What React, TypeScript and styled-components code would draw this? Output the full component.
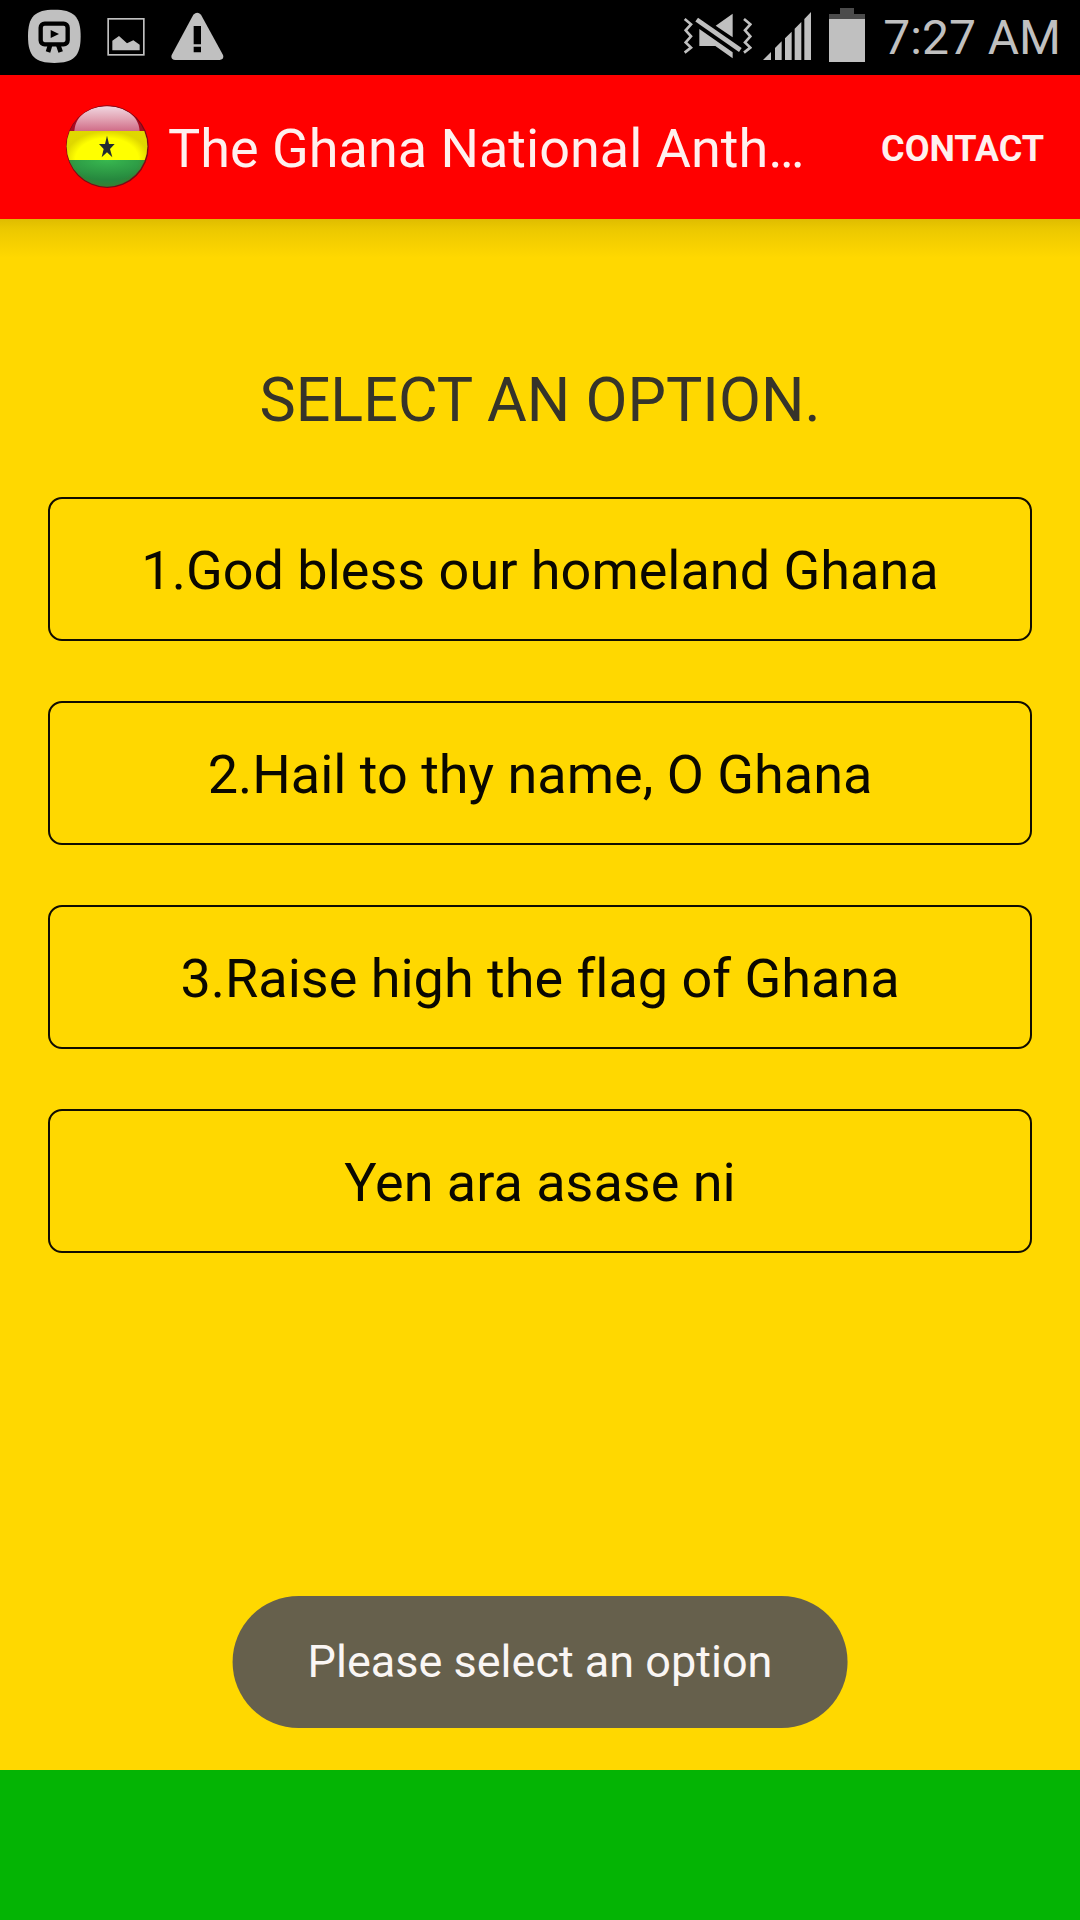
import React, { useState } from "react";
import styled, { createGlobalStyle } from "styled-components";

const GlobalStyle = createGlobalStyle`
  *, *::before, *::after { box-sizing: border-box; }
  body {
    margin: 0;
    background: #ffd800;
    font-family: Roboto, "Noto Sans", sans-serif;
    font-variant-ligatures: none;
  }
`;

const Screen = styled.div`
  display: flex;
  flex-direction: column;
  min-height: 100vh;
`;

const StatusBar = styled.div`
  display: flex;
  justify-content: space-between;
  height: 75px;
  padding: 0 19px 0 28px;
  background: #000;
  color: #c0c0c0;
`;

const StatusGroup = styled.div<{ $gap: number }>`
  display: flex;
  align-items: center;
  gap: ${(p) => p.$gap}px;
`;

const StatusIcon = styled.svg`
  display: block;
  height: 75px;
  fill: currentColor;
`;

const Clock = styled.time`
  font-size: 48px;
  line-height: 72px;
  white-space: nowrap;
`;

const AppBar = styled.header`
  display: flex;
  align-items: center;
  height: 144px;
  padding-left: 65px;
  background: #f00;
  color: #fff0ee;
`;

const FlagIcon = styled.svg`
  flex: none;
  width: 84px;
  height: 84px;
  margin-right: 19px;
`;

const Title = styled.h1`
  flex: 1;
  min-width: 0;
  margin: 0;
  padding-top: 4px;
  font-size: 54px;
  font-weight: 400;
  line-height: 72px;
  white-space: nowrap;
  overflow: hidden;
  text-overflow: ellipsis;
`;

const ContactButton = styled.button`
  flex: none;
  height: 144px;
  padding: 4px 36px 0 60px;
  border: 0;
  background: none;
  color: inherit;
  font: 700 36px/48px Roboto, sans-serif;
  text-transform: uppercase;
  cursor: pointer;
`;

const Main = styled.main`
  flex: 1;
  padding: 144px 48px 60px;
  background: linear-gradient(#dfbc00, #ebc800 25%, #f6d000 62%, #ffd800) top / 100% 39px
    no-repeat #ffd800;
`;

const Heading = styled.h2`
  margin: 0 0 60px;
  color: #36342a;
  font-size: 61px;
  font-weight: 400;
  line-height: 74px;
  text-align: center;
`;

const OptionList = styled.div`
  display: flex;
  flex-direction: column;
  gap: 60px;
`;

const OptionButton = styled.button`
  height: 144px;
  padding: 4px 24px 0;
  border: 2px solid #100c00;
  border-radius: 14px;
  background: transparent;
  color: #0a0800;
  font: 400 54px/64px Roboto, sans-serif;
  font-variant-ligatures: none;
  cursor: pointer;
`;

const Toast = styled.div`
  position: fixed;
  left: 50%;
  bottom: 192px;
  transform: translateX(-50%);
  padding: 36px 75px;
  border-radius: 66px;
  background: #66604c;
  color: #faf6f4;
  font-size: 45px;
  line-height: 60px;
  white-space: nowrap;
`;

const Footer = styled.footer`
  height: 150px;
  background: #04b404;
`;

const options = [
  "1.God bless our homeland Ghana",
  "2.Hail to thy name, O Ghana",
  "3.Raise high the flag of Ghana",
  "Yen ara asase ni",
];

const RecorderIcon = () => (
  <StatusIcon width="53" viewBox="83 0 159 225" aria-hidden="true">
    <path d="M162 29c58 0 79 20 79 80s-21 80-79 80-79-20-79-80 21-80 79-80z" />
    <rect x="121" y="71" width="81" height="62" rx="12" fill="none" stroke="#000" strokeWidth="13" />
    <path d="M151 90v24l25-12z" fill="#000" />
    <path d="M149 136l-6 20M174 136l7 20" stroke="#000" strokeWidth="14" />
  </StatusIcon>
);

const PictureIcon = () => (
  <StatusIcon width="38" viewBox="320 0 114 225" aria-hidden="true">
    <rect x="323.5" y="56.5" width="107" height="108" fill="none" stroke="currentColor" strokeWidth="5" />
    <path d="M336 151v-29l20-14 24 22 19-9 19 13v17z" />
  </StatusIcon>
);

const WarningIcon = () => (
  <StatusIcon width="53" viewBox="514 0 159 225" aria-hidden="true">
    <path d="M581 44q12-11 23 0l66 121q4 13-10 15H527q-15-2-11-15z" />
    <path d="M582 78h22v55h-22zM582 140h22v17h-22z" fill="#000" />
  </StatusIcon>
);

const MuteIcon = () => (
  <StatusIcon width="69" viewBox="70 0 207 225" aria-hidden="true">
    <path d="M168 77l51-36v71zM119 87l100 70v18l-52-37h-48z" />
    <path d="M111 59l131 91" stroke="#000" strokeWidth="29" />
    <path d="M111 59l131 91" stroke="currentColor" strokeWidth="14" />
    <path
      d="M75 57l19 16-16 18 16 18-16 18 16 16-19 15M253 57l19 16-16 18 16 18-16 18 16 16-19 15"
      fill="none"
      stroke="currentColor"
      strokeWidth="8"
    />
  </StatusIcon>
);

const SignalIcon = () => (
  <StatusIcon width="48" viewBox="309 0 144 225" aria-hidden="true">
    <path d="M309 180l24-24v24zM345 180v-36l20-20v56zM375 180v-65l20-20v85zM404 180V86l20-20v114zM433 180V57l20-21v144z" />
  </StatusIcon>
);

const BatteryIcon = () => (
  <StatusIcon width="36" viewBox="507 0 108 225" aria-hidden="true">
    <path d="M540 24h42v18h33v15H507V42h33z" fill="#4b4b4b" />
    <path d="M507 57h108v129H507z" />
  </StatusIcon>
);

const GhanaFlag = () => (
  <FlagIcon viewBox="0 0 252 252" role="img" aria-label="Flag of Ghana">
    <defs>
      <clipPath id="ball">
        <circle cx="126" cy="124" r="121" />
      </clipPath>
      <linearGradient id="gloss" x1="0" y1="0" x2="0" y2="1">
        <stop offset="0" stopColor="#f0d6e0" />
        <stop offset=".5" stopColor="#e2a4b4" />
        <stop offset="1" stopColor="#d06c88" />
      </linearGradient>
      <radialGradient id="leaf" cx=".5" cy="0" r=".7">
        <stop offset="0" stopColor="#38b850" />
        <stop offset="1" stopColor="#26883e" />
      </radialGradient>
      <radialGradient id="shade">
        <stop offset=".75" stopColor="#806000" stopOpacity="0" />
        <stop offset="1" stopColor="#806000" stopOpacity=".25" />
      </radialGradient>
    </defs>
    <circle cx="127" cy="125" r="124" fill="#7c0a14" />
    <g clipPath="url(#ball)">
      <path d="M0 0h252v78H0z" fill="#a80c24" />
      <path d="M28 78C32 28 76 4 126 4s94 24 98 74z" fill="url(#gloss)" />
      <path d="M0 78h252v87H0z" fill="#ff0" />
      <path d="M0 165h252v84H0z" fill="url(#leaf)" />
      <path d="M0 78h252v171H0z" fill="url(#shade)" />
    </g>
    <path d="M126 92l6 25h17l-14 15 7 25-16-15-16 15 6-25-14-15h18z" fill="#222a32" />
  </FlagIcon>
);

export default function App() {
  const [message, setMessage] = useState("Please select an option");

  return (
    <>
      <GlobalStyle />
      <Screen>
        <StatusBar>
          <StatusGroup $gap={26}>
            <RecorderIcon />
            <PictureIcon />
            <WarningIcon />
          </StatusGroup>
          <StatusGroup $gap={18}>
            <StatusGroup $gap={11}>
              <MuteIcon />
              <SignalIcon />
            </StatusGroup>
            <BatteryIcon />
            <Clock>7:27 AM</Clock>
          </StatusGroup>
        </StatusBar>
        <AppBar>
          <GhanaFlag />
          <Title>The Ghana National Anthem</Title>
          <ContactButton type="button">Contact</ContactButton>
        </AppBar>
        <Main>
          <Heading>SELECT AN OPTION.</Heading>
          <OptionList>
            {options.map((option) => (
              <OptionButton key={option} type="button" onClick={() => setMessage(option)}>
                {option}
              </OptionButton>
            ))}
          </OptionList>
        </Main>
        <Footer />
        <Toast role="status">{message}</Toast>
      </Screen>
    </>
  );
}
